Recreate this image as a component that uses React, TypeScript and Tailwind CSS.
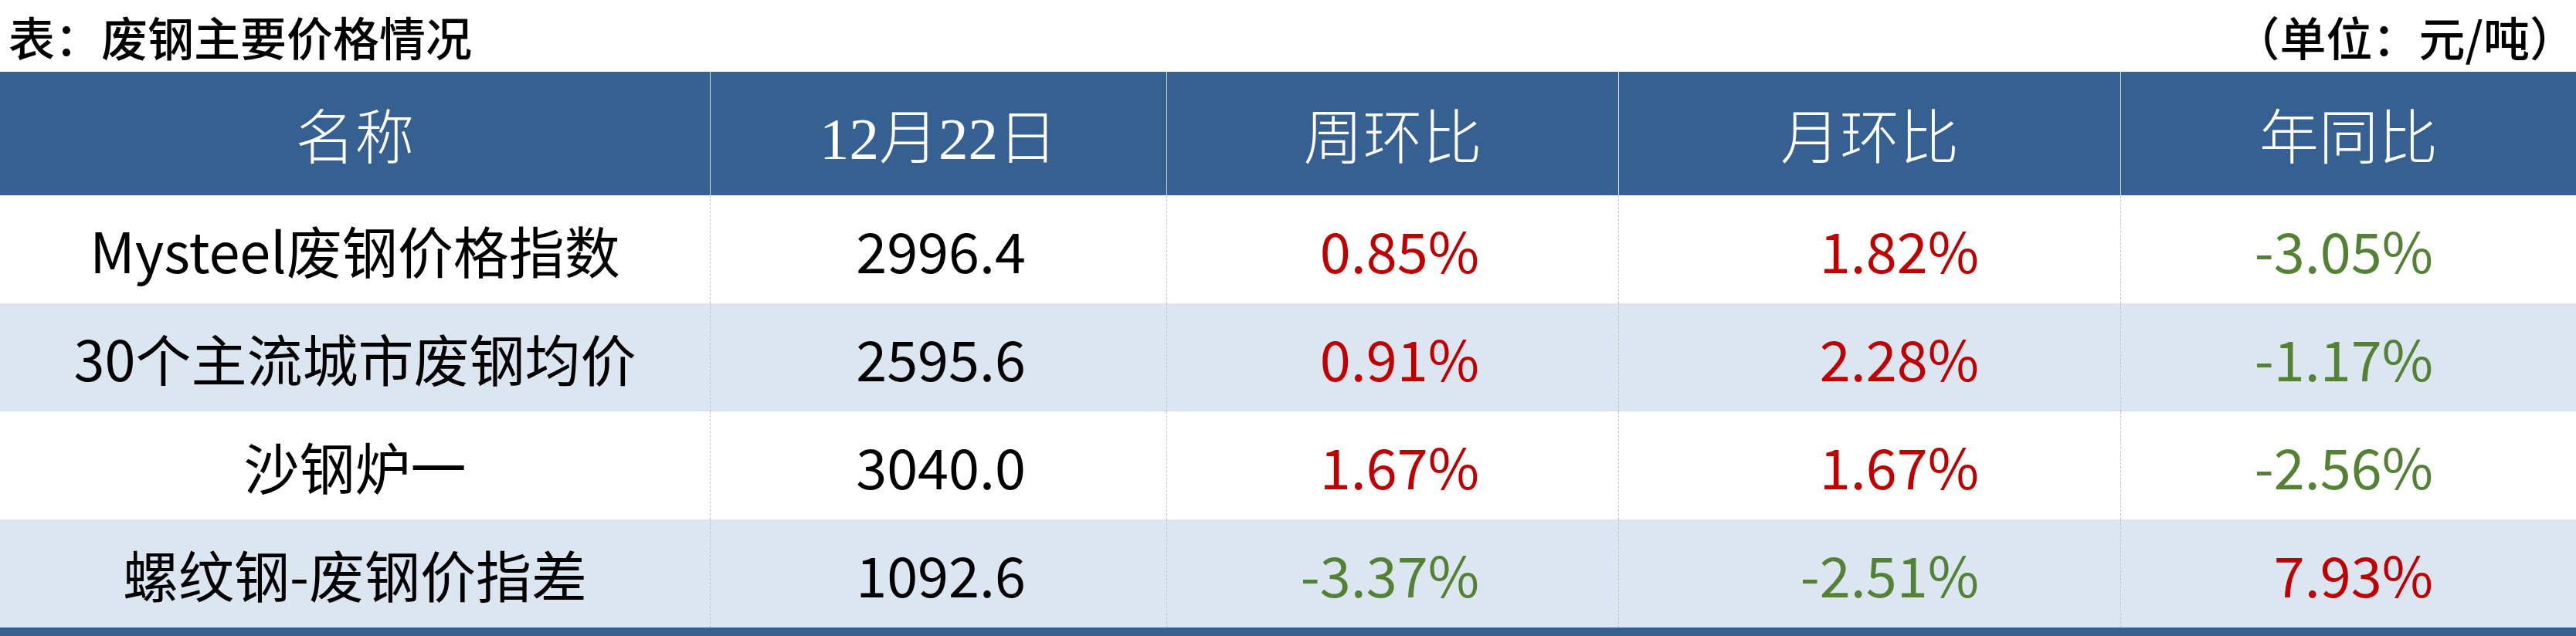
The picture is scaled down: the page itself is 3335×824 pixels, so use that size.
import React from 'react';

type Row = { name: string; price: string; w: string; m: string; y: string; alt: boolean };

const rows: Row[] = [
  { name: 'Mysteel废钢价格指数', price: '2996.4', w: '0.85%', m: '1.82%', y: '-3.05%', alt: false },
  { name: '30个主流城市废钢均价', price: '2595.6', w: '0.91%', m: '2.28%', y: '-1.17%', alt: true },
  { name: '沙钢炉一', price: '3040.0', w: '1.67%', m: '1.67%', y: '-2.56%', alt: false },
  { name: '螺纹钢-废钢价指差', price: '1092.6', w: '-3.37%', m: '-2.51%', y: '7.93%', alt: true },
];

const sans = { fontFamily: '"Noto Sans CJK SC", "Noto Sans", sans-serif' };

function Pct({ v }: { v: string }) {
  const neg = v.startsWith('-');
  return <span className={neg ? 'text-[#548235]' : 'text-[#c00000]'}>{v}</span>;
}

export default function App() {
  return (
    <div className="w-[3335px] h-[824px] bg-white overflow-hidden" style={sans}>
      <div className="flex h-[93px] items-center justify-between pl-[11px] pr-0 text-[60px] font-medium leading-none text-black">
        <span>表：废钢主要价格情况</span>
        <span>（单位：元/吨）</span>
      </div>
      <div
        className="grid grid-cols-[919px_591px_585px_650px_590px] h-[160px] bg-[#376092] text-white text-[77px] font-light leading-none"
        style={{ fontFamily: '"Liberation Serif", "Noto Sans CJK SC", serif' }}
      >
        <div className="flex items-center justify-center pt-[14px]">名称</div>
        <div className="flex items-center justify-center pt-[14px] border-l border-[#d6dde8]">12月22日</div>
        <div className="flex items-center justify-center pt-[14px] border-l border-[#d6dde8]">周环比</div>
        <div className="flex items-center justify-center pt-[14px] border-l border-[#d6dde8]">月环比</div>
        <div className="flex items-center justify-center pt-[14px] border-l border-[#d6dde8]">年同比</div>
      </div>
      {rows.map((r) => (
        <div
          key={r.name}
          className={
            'grid grid-cols-[919px_591px_585px_650px_590px] h-[140px] text-[72px] leading-none text-black ' +
            (r.alt ? 'bg-[#dce6f1]' : 'bg-white')
          }
        >
          <div className="flex items-center justify-center">{r.name}</div>
          <div className="flex items-center justify-end pr-[182px] border-l border-dashed border-[#c4c4c4]">{r.price}</div>
          <div className="flex items-center justify-end pr-[180px] border-l border-dashed border-[#c4c4c4]">
            <Pct v={r.w} />
          </div>
          <div className="flex items-center justify-end pr-[183px] border-l border-dashed border-[#c4c4c4]">
            <Pct v={r.m} />
          </div>
          <div className="flex items-center justify-end pr-[185px] border-l border-dashed border-[#c4c4c4]">
            <Pct v={r.y} />
          </div>
        </div>
      ))}
      <div className="h-[11px] bg-[#376092]" />
    </div>
  );
}
